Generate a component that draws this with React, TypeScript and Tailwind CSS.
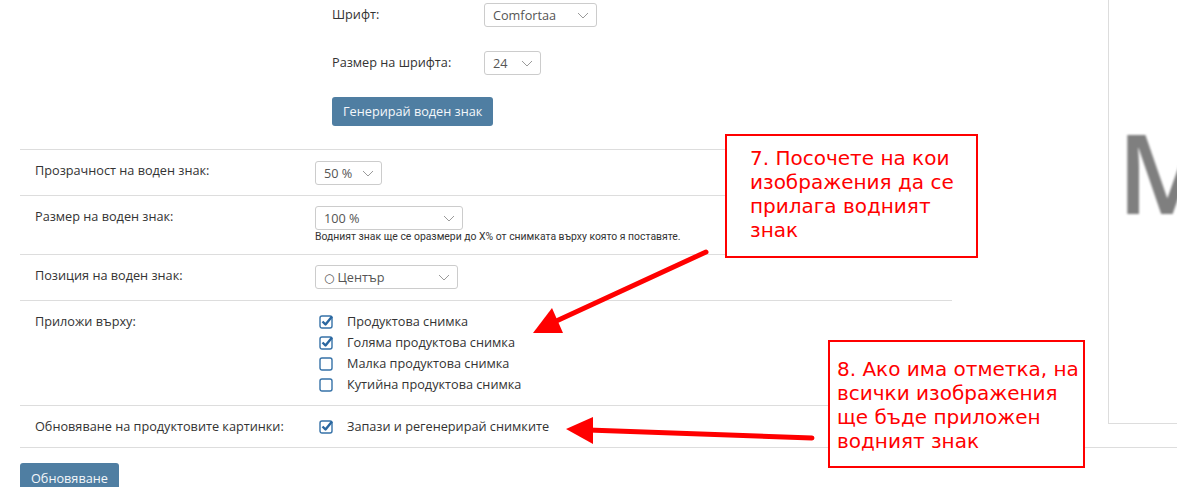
import React from "react";

// Thin chevron used inside the fake select boxes
const Chevron = () => (
  <svg width="12" height="7" viewBox="0 0 12 7" className="shrink-0">
    <polyline points="1,1 6,6 11,1" fill="none" stroke="#9a9a9a" strokeWidth="1" />
  </svg>
);

const Select = ({ value, className, circle }: { value: string; className: string; circle?: boolean }) => (
  <div
    className={`flex items-center justify-between h-[24px] border border-[#ccc] rounded-[3px] pl-[8px] pr-[7px] text-[#555] bg-white ${className}`}
  >
    <span className="leading-[20px]">
      {circle && <span className="font-['DejaVu_Sans',sans-serif] text-[12px] mr-[3px]">○</span>}
      {value}
    </span>
    <Chevron />
  </div>
);

const Checkbox = ({ checked }: { checked: boolean }) => (
  <svg width="16" height="15" viewBox="0 0 16 15" className="shrink-0">
    <rect x="1" y="2" width="12" height="12" rx="2" fill="white" stroke="#3672a8" strokeWidth="1.4" />
    {checked && (
      <path d="M3.5 7.5 L6.5 10.5 L13 2.5" fill="none" stroke="#2a67a0" strokeWidth="2.4" strokeLinejoin="round" />
    )}
  </svg>
);

const CheckItem = ({ label, checked }: { label: string; checked: boolean }) => (
  <div className="flex items-center h-[21px] pl-[4px]">
    <Checkbox checked={checked} />
    <span className="ml-[12px] leading-[21px]">{label}</span>
  </div>
);

const App = () => {
  return (
    <div className="relative w-[1177px] h-[487px] overflow-hidden bg-white font-['Open_Sans',sans-serif] text-[12.7px] text-[#333]">
      <div className="flex items-start pl-[20px]">
        {/* Form column */}
        <div className="w-[1088px] shrink-0">
          {/* Font sub-settings */}
          <div className="pl-[312px] pt-[3px] pb-[23px]">
            <div className="flex items-center h-[24px]">
              <span className="w-[152px]">Шрифт:</span>
              <Select value="Comfortaa" className="w-[113px]" />
            </div>
            <div className="flex items-center h-[24px] mt-[24px]">
              <span className="w-[152px]">Размер на шрифта:</span>
              <Select value="24" className="w-[57px]" />
            </div>
            <button className="mt-[22px] h-[29px] px-[11px] rounded-[3px] bg-[#4f7ea2] text-[#f4f7fa] leading-[29px] block">
              Генерирай воден знак
            </button>
          </div>

          {/* Settings rows */}
          <div className="w-[932px]">
            <div className="flex border-t border-[#ddd] pt-[10px] pb-[10px]">
              <div className="w-[295px] pl-[15px] leading-[20px]">Прозрачност на воден знак:</div>
              <Select value="50 %" className="w-[67px] mt-[1px]" />
            </div>
            <div className="flex border-t border-[#ddd] pt-[10px] pb-[11px]">
              <div className="w-[295px] pl-[15px] leading-[20px]">Размер на воден знак:</div>
              <div>
                <Select value="100 %" className="w-[148px]" />
                <div className="mt-[1px] font-['Roboto',sans-serif] text-[10.4px] leading-[12px] text-[#333] whitespace-nowrap">
                  Водният знак ще се оразмери до X% от снимката върху която я поставяте.
                </div>
              </div>
            </div>
            <div className="flex border-t border-[#ddd] pt-[10px] pb-[11px]">
              <div className="w-[295px] pl-[15px] leading-[20px]">Позиция на воден знак:</div>
              <Select value="Център" circle className="w-[143px]" />
            </div>
            <div className="flex border-t border-[#ddd] pt-[10px] pb-[10px]">
              <div className="w-[295px] pl-[15px] leading-[21px]">Приложи върху:</div>
              <div>
                <CheckItem label="Продуктова снимка" checked />
                <CheckItem label="Голяма продуктова снимка" checked />
                <CheckItem label="Малка продуктова снимка" checked={false} />
                <CheckItem label="Кутийна продуктова снимка" checked={false} />
              </div>
            </div>
            <div className="flex border-t border-[#ddd] pt-[10px] pb-[10px]">
              <div className="w-[295px] pl-[15px] leading-[21px]">Обновяване на продуктовите картинки:</div>
              <CheckItem label="Запази и регенерирай снимките" checked />
            </div>
          </div>
        </div>

        {/* Watermark preview */}
        <div className="w-[300px] h-[424px] shrink-0 border-l border-b border-[#ddd] pl-[8px] pt-[116px] overflow-hidden">
          <div className="font-['Open_Sans',sans-serif] font-semibold text-[110px] leading-none text-[#7f7f7f] blur-[1px]">
            M
          </div>
        </div>
      </div>

      {/* Footer */}
      <div className="ml-[20px] border-t border-[#ddd] pt-[15px]">
        <button className="h-[30px] px-[11px] rounded-[3px] bg-[#4f7ea2] text-[#f4f7fa] leading-[30px]">
          Обновяване
        </button>
      </div>

      {/* Annotation callouts */}
      <div className="absolute left-[725px] top-[134px] w-[253px] h-[124px] border-2 border-[#ff0000] bg-white pl-[23px] pt-[10px] font-['DejaVu_Sans',sans-serif] text-[20px] leading-[24px] text-[#ff0000]">
        7. Посочете на кои
        <br />
        изображения да се
        <br />
        прилага водният
        <br />
        знак
      </div>
      <div className="absolute left-[828px] top-[340px] w-[257px] h-[128px] border-2 border-[#ff0000] bg-white pl-[7px] pt-[15px] font-['DejaVu_Sans',sans-serif] text-[20px] leading-[24px] text-[#ff0000]">
        8. Ако има отметка, на
        <br />
        всички изображения
        <br />
        ще бъде приложен
        <br />
        водният знак
      </div>

      {/* Arrows */}
      <svg className="absolute left-0 top-0 pointer-events-none" width="1177" height="487" viewBox="0 0 1177 487">
        <line x1="706" y1="252" x2="552" y2="323" stroke="#ff0000" strokeWidth="5" strokeLinecap="round" />
        <polygon points="533,333 552,308 563,333" fill="#ff0000" />
        <line x1="812" y1="438" x2="588" y2="430" stroke="#ff0000" strokeWidth="5" strokeLinecap="round" />
        <polygon points="566,429 593,417 593,444" fill="#ff0000" />
      </svg>
    </div>
  );
};

export default App;
